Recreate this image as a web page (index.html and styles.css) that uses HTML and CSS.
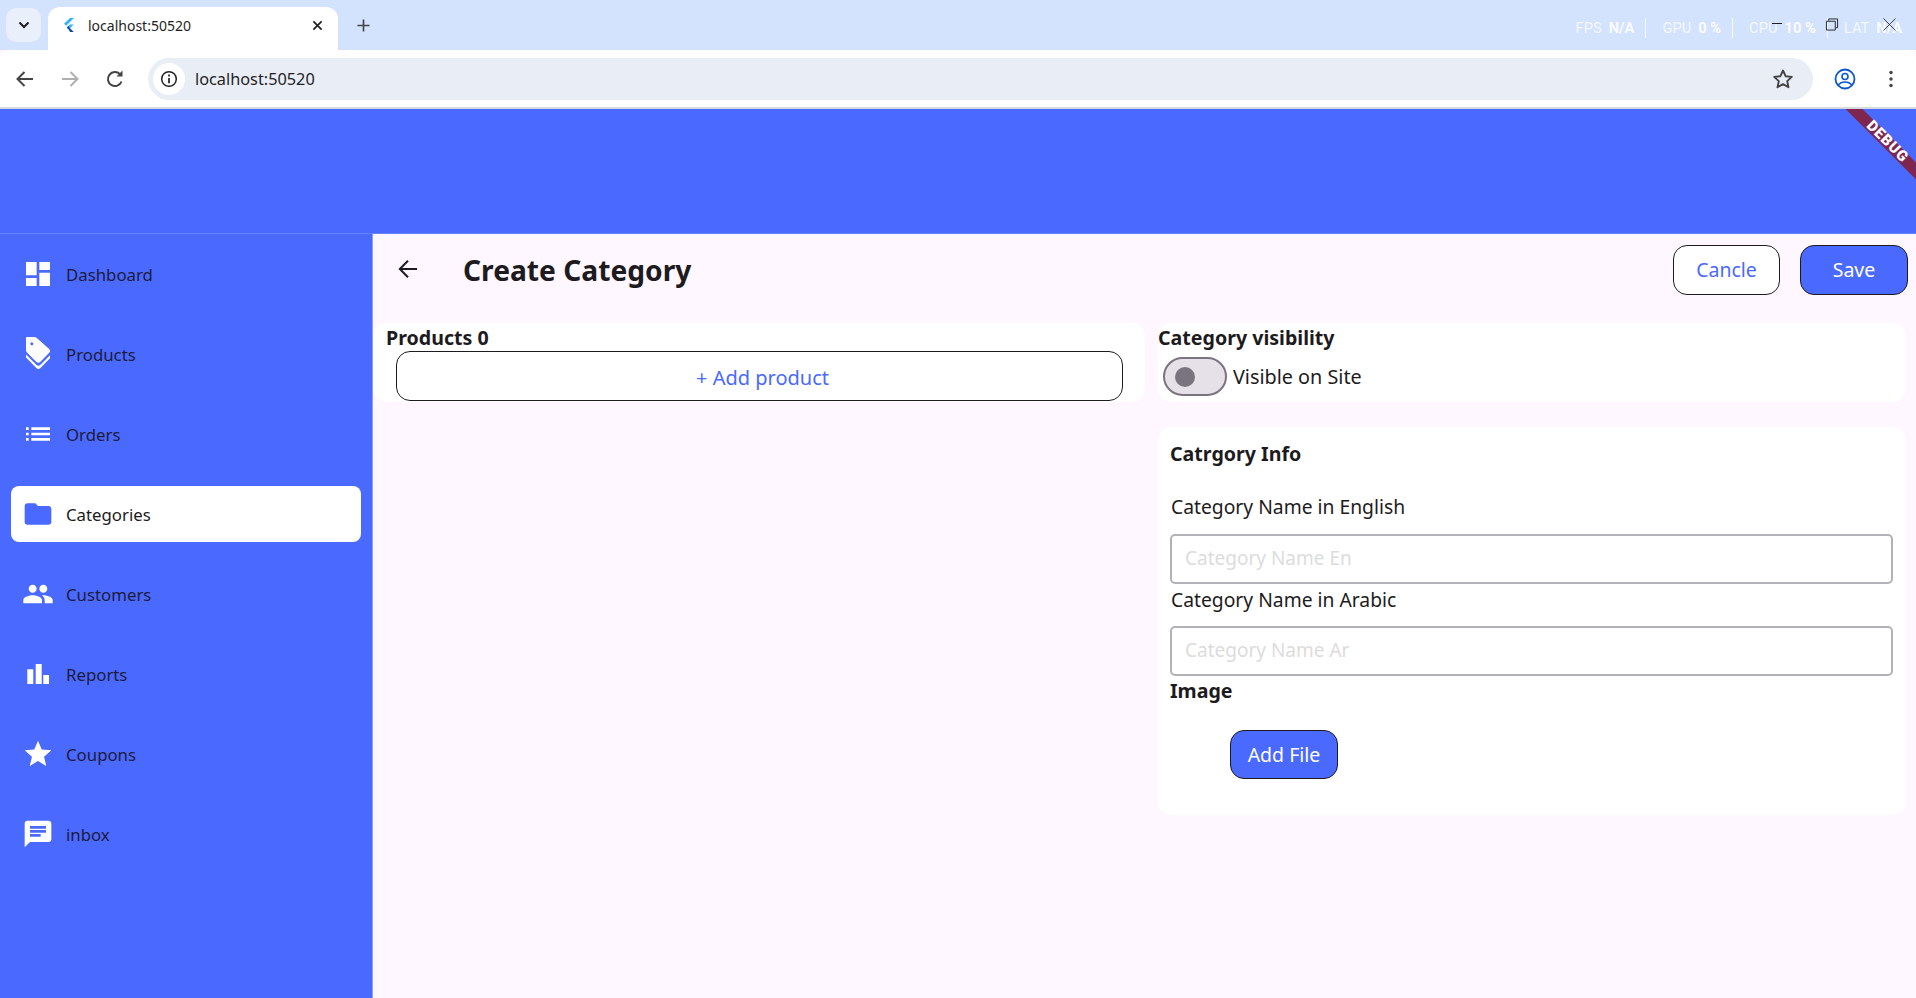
FILE: index.html
```html
<!DOCTYPE html>
<html lang="en">
<head>
    <meta charset="UTF-8">
    <title>localhost:50520</title>
    <link rel="stylesheet" href="styles.css">
</head>
<body>
    <!-- Browser tab strip -->
    <div class="tab-strip">
        <div class="tab-search">
            <svg class="ico-16" viewBox="0 0 16 16"><path d="M3.500 5.500 8 10l4.500-4.500" fill="none" stroke="#1f1f1f" stroke-width="2"/></svg>
        </div>
        <div class="tab">
            <svg class="tab-favicon" viewBox="0 0 11 14">
                <path d="M7 0h4L3.200 7.800 1 5.800z" fill="#35b4f5"/>
                <path d="M10.800 6.500H7L3.800 9.600 5.800 11.600z" fill="#35b4f5"/>
                <path d="M3.800 9.700 5.800 11.600 7 14h3.800L6.500 9.800 5.500 8z" fill="#0d47a1"/>
            </svg>
            <span class="tab-title">localhost:50520</span>
            <svg class="tab-close" viewBox="0 0 12 12"><path d="M1.500 1.500l9 9m0-9l-9 9" stroke="#1f1f1f" stroke-width="1.800"/></svg>
        </div>
        <svg class="tab-new" viewBox="0 0 14 14"><path d="M7 .5v13M.5 7h13" stroke="#444" stroke-width="1.800"/></svg>

        <div class="stats">
            <span>FPS</span><b>N/A</b><i class="stats-sep"></i>
            <span>GPU</span><b>0 %</b><i class="stats-sep"></i>
            <span>CPU</span><b>10 %</b><i class="stats-sep"></i>
            <span>LAT</span><b>N/A</b>
        </div>

        <!-- window buttons sit on top of the stats overlay -->
        <div class="win-min"></div>
        <svg class="win-restore" viewBox="0 0 14 14"><path d="M3.500 3V1h9.500v9.500h-2M1 3.500h9.500V13H1z" fill="none" stroke="#1f1f1f"/></svg>
        <svg class="win-close" viewBox="0 0 14 14"><path d="M.5.500l13 13m0-13l-13 13" stroke="#1f1f1f" stroke-width=".9"/></svg>
    </div>

    <!-- Browser toolbar -->
    <div class="toolbar">
        <svg class="tool-ico" viewBox="0 0 24 24"><path d="M20 12H5m6.500-7L4.500 12l7 7" fill="none" stroke="#444" stroke-width="2"/></svg>
        <svg class="tool-ico" viewBox="0 0 24 24"><path d="M4 12h15m-6.500-7l7 7-7 7" fill="none" stroke="#b0b0b0" stroke-width="2"/></svg>
        <svg class="tool-ico" viewBox="0 0 24 24"><path d="M18.500 14.500A7 7 0 1 1 17 7.200" fill="none" stroke="#444" stroke-width="2"/><path d="M19.500 3.500v6h-6z" fill="#444"/></svg>
        <div class="address">
            <div class="address-info">
                <svg class="ico-18" viewBox="0 0 18 18"><circle cx="9" cy="9" r="7.300" fill="none" stroke="#1f1f1f" stroke-width="1.500"/><path d="M9 8v5.200M9 4.600v1.800" stroke="#1f1f1f" stroke-width="1.700"/></svg>
            </div>
            <span class="address-text">localhost:50520</span>
            <svg class="address-star" viewBox="0 0 24 24"><path d="M12 3.500l2.600 5.700 6.200.7-4.600 4.200 1.300 6.100L12 17.100l-5.500 3.100 1.300-6.100-4.600-4.200 6.200-.7z" fill="none" stroke="#444" stroke-width="1.900" stroke-linejoin="round"/></svg>
        </div>
        <svg class="tool-profile" viewBox="0 0 22 22"><circle cx="11" cy="11" r="9.500" fill="none" stroke="#0b57d0" stroke-width="1.800"/><circle cx="11" cy="8.500" r="3" fill="none" stroke="#0b57d0" stroke-width="1.600"/><path d="M4.500 17c1.500-2.300 4-3 6.500-3s5 .7 6.500 3" fill="none" stroke="#0b57d0" stroke-width="1.600"/></svg>
        <svg class="tool-menu" viewBox="0 0 4 18"><circle cx="2" cy="2.500" r="1.700" fill="#444"/><circle cx="2" cy="9" r="1.700" fill="#444"/><circle cx="2" cy="15.500" r="1.700" fill="#444"/></svg>
    </div>

    <!-- Flutter app -->
    <div class="app">
        <div class="app-bar"></div>
        <div class="debug-banner"><span>DEBUG</span></div>

        <div class="app-body">
            <nav class="sidebar">
                <a class="nav-item">
                    <svg class="nav-ico" viewBox="0 0 24 24"><path d="M3 13h8V3H3v10zm0 8h8v-6H3v6zm10 0h8V11h-8v10zm0-18v6h8V3h-8z"/></svg>
                    <span>Dashboard</span>
                </a>
                <a class="nav-item">
                    <svg class="nav-ico nav-ico-tall" viewBox="0 0 32 36"><path fill-rule="evenodd" d="M5 1h7.500c.8 0 1.500.3 2 .8L27.200 13c1.100 1.100 1.100 2.800 0 3.800l-9 9.300c-1 1-2.700 1-3.800 0L5.200 16.700C4.400 16 4 15 4 14V2c0-.6.400-1 1-1zm4.800 5.300a1.500 1.500 0 1 0 0 3 1.500 1.500 0 0 0 0-3z"/><path d="M4 18.500l10.600 10.600c1 1 2.600 1 3.600 0L28 19.300v3l-9.800 9.900c-1 1-2.600 1-3.600 0L4 21.600z"/></svg>
                    <span>Products</span>
                </a>
                <a class="nav-item">
                    <svg class="nav-ico" viewBox="0 0 24 24"><path d="M3 13h2v-2H3v2zm0 4h2v-2H3v2zm0-8h2V7H3v2zm4 4h14v-2H7v2zm0 4h14v-2H7v2zM7 7v2h14V7H7z"/></svg>
                    <span>Orders</span>
                </a>
                <a class="nav-item nav-item-active">
                    <svg class="nav-ico" viewBox="0 0 24 24"><path d="M10 4H4c-1.100 0-1.990.9-1.990 2L2 18c0 1.100.9 2 2 2h16c1.100 0 2-.9 2-2V8c0-1.100-.9-2-2-2h-8l-2-2z"/></svg>
                    <span>Categories</span>
                </a>
                <a class="nav-item">
                    <svg class="nav-ico" viewBox="0 0 24 24"><path d="M16 11c1.660 0 2.990-1.340 2.990-3S17.660 5 16 5c-1.660 0-3 1.340-3 3s1.340 3 3 3zm-8 0c1.660 0 2.990-1.340 2.990-3S9.660 5 8 5C6.340 5 5 6.340 5 8s1.340 3 3 3zm0 2c-2.330 0-7 1.170-7 3.500V19h14v-2.500c0-2.330-4.670-3.500-7-3.500zm8 0c-.29 0-.62.02-.97.05 1.160.84 1.970 1.970 1.970 3.450V19h6v-2.500c0-2.330-4.670-3.500-7-3.500z"/></svg>
                    <span>Customers</span>
                </a>
                <a class="nav-item">
                    <svg class="nav-ico" viewBox="0 0 32 32"><path d="M5.300 11.300h6V26h-6zM13.700 6h6v20h-6zM21.300 17H27v9h-5.700z"/></svg>
                    <span>Reports</span>
                </a>
                <a class="nav-item">
                    <svg class="nav-ico" viewBox="0 0 24 24"><path d="M12 17.270L18.180 21l-1.640-7.030L22 9.240l-7.190-.61L12 2 9.190 8.630 2 9.240l5.460 4.730L5.820 21z"/></svg>
                    <span>Coupons</span>
                </a>
                <a class="nav-item">
                    <svg class="nav-ico" viewBox="0 0 24 24"><path d="M20 2H4c-1.100 0-1.990.9-1.990 2L2 22l4-4h14c1.100 0 2-.9 2-2V4c0-1.100-.9-2-2-2zM6 9h12v2H6V9zm8 5H6v-2h8v2zm4-6H6V6h12v2z"/></svg>
                    <span>inbox</span>
                </a>
            </nav>

            <main class="content">
                <div class="page-head">
                    <svg class="back-arrow" viewBox="0 0 22 22"><path d="M21 11H2.500M11 2l-9 9 9 9" fill="none" stroke="#1d1b20" stroke-width="2.200"/></svg>
                    <h1 class="page-title">Create Category</h1>
                    <button class="btn btn-outline">Cancle</button>
                    <button class="btn btn-primary">Save</button>
                </div>

                <div class="columns">
                    <div class="col">
                        <section class="card card-products">
                            <h3 class="card-title">Products 0</h3>
                            <button class="add-product">+ Add product</button>
                        </section>
                    </div>

                    <div class="col">
                        <section class="card card-visibility">
                            <h3 class="card-title">Category visibility</h3>
                            <div class="switch-row">
                                <div class="switch"><div class="switch-knob"></div></div>
                                <span>Visible on Site</span>
                            </div>
                        </section>

                        <section class="card card-info">
                            <h3 class="card-title">Catrgory Info</h3>
                            <label class="field-label">Category Name in English</label>
                            <input class="field-input" type="text" placeholder="Category Name En">
                            <label class="field-label label-tight">Category Name in Arabic</label>
                            <input class="field-input" type="text" placeholder="Category Name Ar">
                            <h3 class="card-title">Image</h3>
                            <button class="btn btn-primary btn-file">Add File</button>
                        </section>
                    </div>
                </div>
            </main>
        </div>
    </div>
</body>
</html>
```

FILE: styles.css
```css
* {
    box-sizing: border-box;
}

html, body {
    margin: 0;
    height: 100%;
    overflow: hidden;
}

body {
    display: flex;
    flex-direction: column;
    font-family: "Noto Sans", "Open Sans", Arial, sans-serif;
    color: #1d1b20;
    background: #fef7ff;
}

svg {
    display: block;
    flex: none;
}

/* Browser tab strip */
.tab-strip {
    position: relative;
    display: flex;
    align-items: flex-end;
    height: 50px;
    flex: none;
    background: #d3e3fd;
}

.ico-16 {
    width: 16px;
    height: 16px;
}

.ico-18 {
    width: 18px;
    height: 18px;
}

.tab-search {
    display: flex;
    align-items: center;
    justify-content: center;
    width: 35px;
    height: 34px;
    margin: 0 7px 8px 6px;
    border-radius: 10px;
    background: #e9effb;
}

.tab {
    display: flex;
    align-items: center;
    width: 290px;
    height: 43px;
    padding: 0 15px 7px;
    border-radius: 12px 12px 0 0;
    background: #fff;
}

.tab-favicon {
    width: 11px;
    height: 14px;
}

.tab-title {
    margin-left: 14px;
    font-size: 14px;
    color: #1f1f1f;
    flex: 1;
}

.tab-close {
    width: 11px;
    height: 11px;
}

.tab-new {
    width: 13px;
    height: 13px;
    margin: 0 0 18px 19px;
}

.stats {
    display: flex;
    align-items: center;
    gap: 7px;
    height: 20px;
    margin: 0 14px 12px auto;
    font-family: Roboto, Arial, sans-serif;
    font-size: 14.700px;
    color: rgba(255, 255, 255, 0.75);
}

.stats b {
    font-weight: 700;
    color: rgba(255, 255, 255, 0.9);
}

.stats-sep {
    width: 1px;
    height: 20px;
    margin: 0 9px 0 4px;
    background: rgba(255, 255, 255, 0.8);
}

.win-min {
    position: absolute;
    left: 1772px;
    top: 23px;
    width: 10px;
    height: 1px;
    background: #1f1f1f;
}

.win-restore {
    position: absolute;
    left: 1825px;
    top: 18px;
    width: 14px;
    height: 13px;
}

.win-close {
    position: absolute;
    left: 1883px;
    top: 18px;
    width: 13px;
    height: 13px;
}

/* Browser toolbar */
.toolbar {
    display: flex;
    align-items: center;
    height: 59px;
    flex: none;
    padding: 1px 0 0 13px;
    background: #fff;
    border-bottom: 2px solid #d5d8dd;
    border-radius: 10px 10px 0 0;
}

.tool-ico {
    width: 24px;
    height: 24px;
    margin-right: 21px;
}

.address {
    display: flex;
    align-items: center;
    width: 1665px;
    height: 42px;
    padding: 0 18px 0 5px;
    border-radius: 21px;
    background: #e9eef6;
}

.address-info {
    display: flex;
    align-items: center;
    justify-content: center;
    width: 32px;
    height: 32px;
    border-radius: 50%;
    background: #fff;
}

.address-text {
    margin-left: 10px;
    flex: 1;
    font-size: 16.300px;
    color: #1f1f1f;
}

.address-star {
    width: 24px;
    height: 24px;
}

.tool-profile {
    width: 22px;
    height: 22px;
    margin-left: 21px;
}

.tool-menu {
    width: 4px;
    height: 18px;
    margin-left: 33px;
}

/* App */
.app {
    position: relative;
    display: flex;
    flex-direction: column;
    flex: 1;
    min-height: 0;
    overflow: hidden;
}

.app-bar {
    height: 125px;
    flex: none;
    background: #4a69ff;
    border-bottom: 1px solid #6582ff;
}

.debug-banner {
    position: absolute;
    top: 27px;
    right: -31px;
    width: 120px;
    height: 12px;
    padding-bottom: 2px;
    transform: rotate(45deg);
    display: flex;
    align-items: center;
    justify-content: center;
    background: #7f2650;
    color: #fff;
    font-family: Roboto, Arial, sans-serif;
    font-size: 15px;
    font-weight: 900;
    letter-spacing: 0.8px;
}

.app-body {
    display: flex;
    flex: 1;
    min-height: 0;
}

.sidebar {
    display: flex;
    flex-direction: column;
    width: 373px;
    flex: none;
    padding: 0 11px;
    background: #4a69ff;
    border-right: 1px solid #8a9fff;
}

.nav-item {
    display: flex;
    align-items: center;
    gap: 12px;
    height: 56px;
    margin: 12px 0;
    padding-left: 11px;
    font-size: 16.800px;
    color: #1d1b3a;
    border-radius: 8px;
}

.nav-item-active {
    background: #fff;
    color: #1d1b20;
}

.nav-ico {
    width: 32px;
    height: 32px;
    fill: #fff;
}

.nav-ico-tall {
    height: 36px;
}

.nav-item-active .nav-ico {
    fill: #4a69ff;
}

/* Main content */
.content {
    flex: 1;
    min-width: 0;
}

.page-head {
    display: flex;
    align-items: center;
    height: 89px;
    padding: 0 8px 18px 25px;
}

.back-arrow {
    width: 20px;
    height: 20px;
    margin: -2px 45px 0 0;
}

.page-title {
    flex: 1;
    margin: 0;
    font-size: 28.200px;
    font-weight: 700;
    color: #1d1b20;
}

.btn {
    width: 108px;
    height: 50px;
    padding: 0;
    font-family: inherit;
    font-size: 19.500px;
    border-radius: 14px;
    border: 1.500px solid #1d1b20;
}

.btn-outline {
    width: 107px;
    background: #fff;
    color: #4a69ff;
    margin-right: 20px;
}

.btn-primary {
    background: #4a69ff;
    color: #fff;
}

.columns {
    display: grid;
    grid-template-columns: 772px 748px;
    gap: 13px;
}

.card {
    background: #fff;
    border-radius: 14px;
}

.card-title {
    margin: 0;
    font-size: 19.600px;
    line-height: 30px;
    font-weight: 700;
    color: #1d1b20;
}

.card-products {
    height: 79px;
    padding-left: 13px;
}

.add-product {
    display: block;
    width: 727px;
    height: 50px;
    margin: -2px 0 0 10px;
    padding: 2px 0 0 6px;
    background: #fff;
    border: 1.500px solid #1d1b20;
    border-radius: 14px;
    font-family: inherit;
    font-size: 20px;
    color: #4a69ff;
}

.card-visibility {
    height: 79px;
}

.switch-row {
    display: flex;
    align-items: center;
    gap: 6px;
    margin-top: 4px;
    padding-left: 5px;
    font-size: 19.800px;
}

.switch {
    display: flex;
    align-items: center;
    width: 64px;
    height: 39px;
    padding-left: 10px;
    border-radius: 20px;
    border: 2px solid #79747e;
    background: #e6e0e9;
}

.switch-knob {
    width: 20px;
    height: 20px;
    border-radius: 50%;
    background: #79747e;
}

.card-info {
    display: flex;
    flex-direction: column;
    align-items: flex-start;
    height: 388px;
    margin-top: 25px;
    padding: 12px 13px 0 12px;
}

.field-label {
    margin: 23px 0 12px 1px;
    font-size: 19.300px;
    line-height: 30px;
}

.label-tight {
    margin: 1px 0 11px 1px;
}

.field-input {
    width: 100%;
    height: 50px;
    flex: none;
    padding: 0 13px 2px;
    border: 2px solid #b3b1b8;
    border-radius: 5px;
    background: #fff;
    font-family: inherit;
    font-size: 19px;
    outline: none;
}

.field-input::placeholder {
    color: #dcdcdc;
    opacity: 1;
}

.btn-file {
    flex: none;
    height: 49px;
    margin: 24px 0 0 60px;
}
```
